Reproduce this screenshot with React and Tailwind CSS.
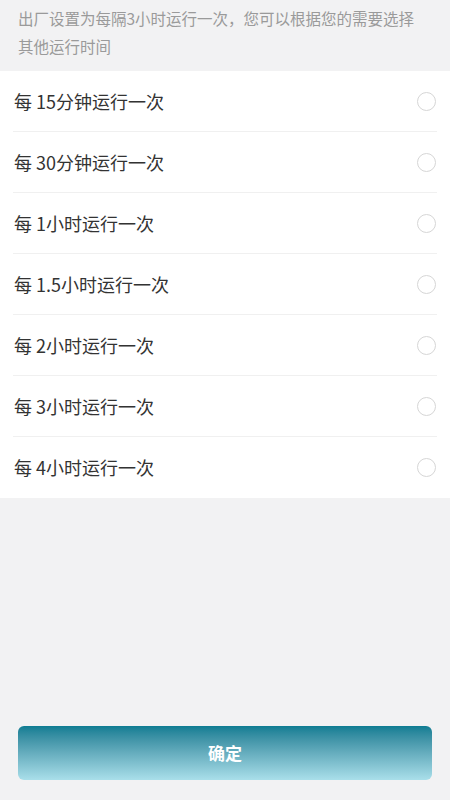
const options = ['15分钟', '30分钟', '1小时', '1.5小时', '2小时', '3小时', '4小时'];

export default function App() {
  return (
    <div
      className="w-[450px] h-[800px] bg-[#f2f2f3] flex flex-col"
      style={{ fontFamily: '"Noto Sans CJK SC", "Noto Sans", sans-serif' }}
    >
      <div className="h-[71px] px-[18px] pt-[4px] text-[15.5px] leading-[28px] text-[#9a9a9a]">
        出厂设置为每隔3小时运行一次，您可以根据您的需要选择
        <br />
        其他运行时间
      </div>

      <div className="bg-white">
        {options.map((o, i) => (
          <div
            key={o}
            className={`mx-[13px] h-[61px] flex items-center justify-between ${i < options.length - 1 ? 'border-b border-[#f0f0f0]' : ''}`}
          >
            <span className="pl-[1px] text-[18px] text-[#333333]">每 {o}运行一次</span>
            <span className="w-[19px] h-[19px] rounded-full border border-[#d6d6d6] mr-[1px]" />
          </div>
        ))}
      </div>

      <div className="flex-1" />

      <div className="px-[18px] pb-[20px]">
        <button className="w-full h-[54px] rounded-[6px] bg-gradient-to-b from-[#0c7d93] to-[#a9dfea] text-white text-[17px] font-bold">
          确定
        </button>
      </div>
    </div>
  );
}
